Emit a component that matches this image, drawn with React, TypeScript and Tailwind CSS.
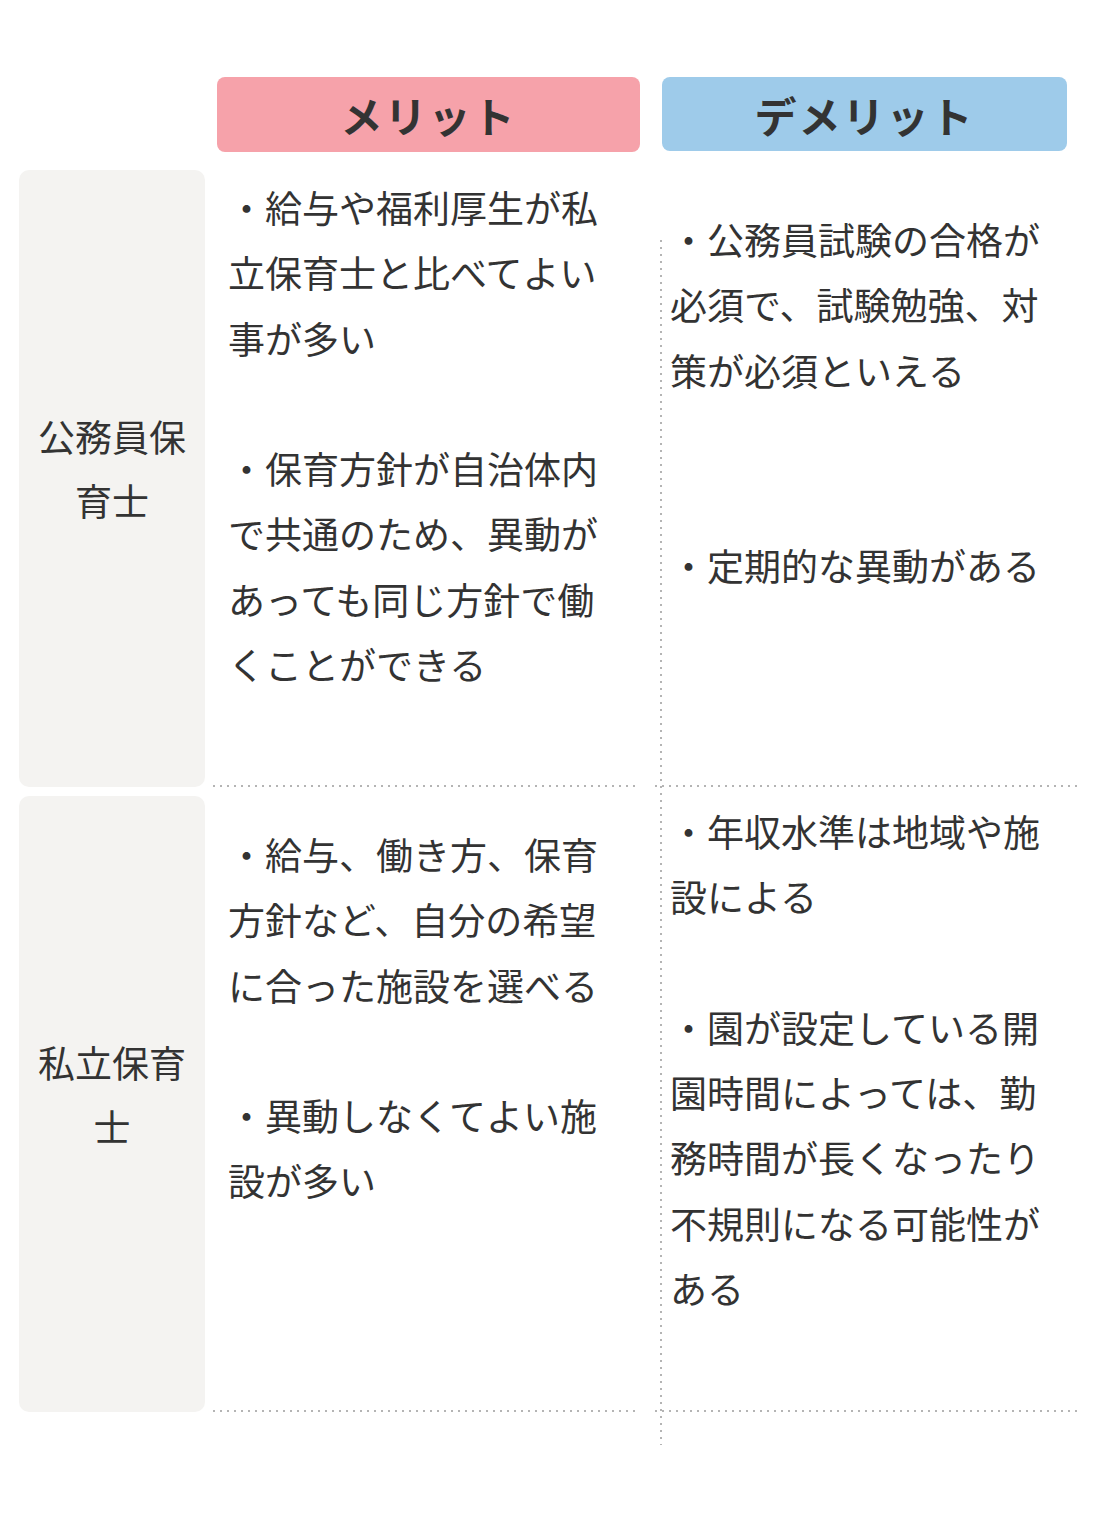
import React from "react";

const hDots =
  "h-[2px] bg-[repeating-linear-gradient(to_right,#b4b4b4_0px,#b4b4b4_2px,transparent_2px,transparent_7px)]";

function Cell({
  items,
  pt,
  pl,
  w,
  ml,
}: {
  items: { text: string; gap?: number }[];
  pt: string;
  pl: string;
  w: string;
  ml: string;
}) {
  return (
    <div className={`flex flex-col ${w} ${ml}`}>
      <div className={`flex-1 ${pt} ${pl}`}>
        <div className="w-[378px] text-[37px] leading-[65.3px]">
          {items.map((t, i) => (
            <p
              key={i}
              className={
                i === 0 ? "" : t.gap === 2 ? "mt-[130.6px]" : "mt-[65.3px]"
              }
            >
              {t.text}
            </p>
          ))}
        </div>
      </div>
      <div className={hDots} />
    </div>
  );
}

function Label({ lines }: { lines: string[] }) {
  return (
    <div className="w-[186px] shrink-0 rounded-[10px] bg-[#f4f3f1] flex flex-col items-center justify-center pb-[21px] text-[37px] leading-[64px]">
      {lines.map((l, i) => (
        <span key={i}>{l}</span>
      ))}
    </div>
  );
}

export default function App() {
  return (
    <div className="relative w-[1100px] h-[1520px] bg-white text-[#333333] font-['Noto_Sans_CJK_JP','Noto_Sans',sans-serif] overflow-hidden">
      <div className="pt-[77px] pl-[19px]">
        {/* header */}
        <div className="flex items-start">
          <div className="w-[198px] shrink-0" />
          <div className="w-[423px] h-[75px] rounded-[8px] bg-[#f6a2aa] flex items-center justify-center text-[42px] font-bold tracking-[2px]">
            メリット
          </div>
          <div className="ml-[22px] w-[405px] h-[74px] rounded-[8px] bg-[#9ecbea] flex items-center justify-center text-[42px] font-bold tracking-[2px]">
            デメリット
          </div>
        </div>

        {/* row 1 */}
        <div className="mt-[18px] flex h-[617px]">
          <Label lines={["公務員保", "育士"]} />
          <Cell
            ml="ml-[8px]"
            w="w-[427px]"
            pt="pt-[5px]"
            pl="pl-[15px]"
            items={[
              { text: "・給与や福利厚生が私立保育士と比べてよい事が多い" },
              {
                text: "・保育方針が自治体内で共通のため、異動があっても同じ方針で働くことができる",
              },
            ]}
          />
          <Cell
            ml="ml-[15px]"
            w="w-[427px]"
            pt="pt-[37px]"
            pl="pl-[15px]"
            items={[
              { text: "・公務員試験の合格が必須で、試験勉強、対策が必須といえる" },
              { text: "・定期的な異動がある", gap: 2 },
            ]}
          />
        </div>

        {/* row 2 */}
        <div className="mt-[9px] flex h-[616px]">
          <Label lines={["私立保育", "士"]} />
          <Cell
            ml="ml-[8px]"
            w="w-[427px]"
            pt="pt-[26px]"
            pl="pl-[15px]"
            items={[
              {
                text: "・給与、働き方、保育方針など、自分の希望に合った施設を選べる",
              },
              { text: "・異動しなくてよい施設が多い" },
            ]}
          />
          <Cell
            ml="ml-[15px]"
            w="w-[427px]"
            pt="pt-[3px]"
            pl="pl-[15px]"
            items={[
              { text: "・年収水準は地域や施設による" },
              {
                text: "・園が設定している開園時間によっては、勤務時間が長くなったり不規則になる可能性がある",
              },
            ]}
          />
        </div>
      </div>

      {/* vertical dotted divider */}
      <div className="absolute left-[660px] top-[240px] h-[1205px] w-[2px] bg-[repeating-linear-gradient(to_bottom,#b4b4b4_0px,#b4b4b4_2px,transparent_2px,transparent_7px)]" />
    </div>
  );
}
